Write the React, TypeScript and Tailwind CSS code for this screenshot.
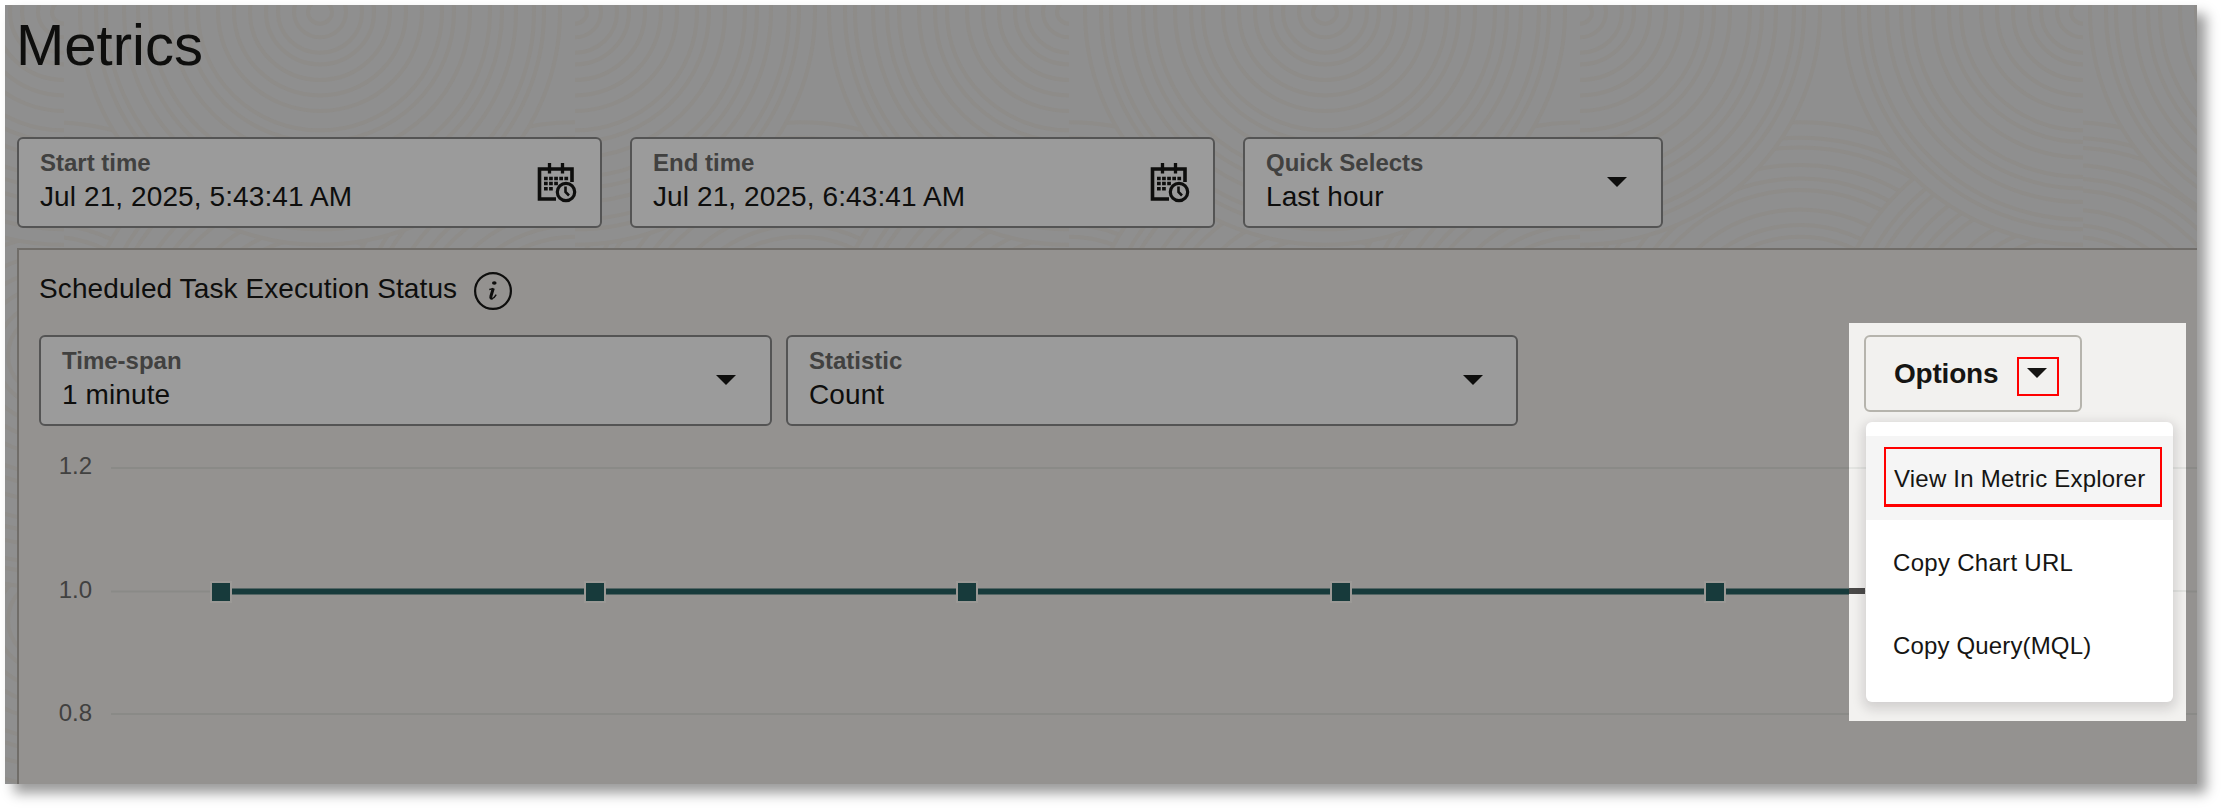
import { ReactNode } from "react";

const FONT = "font-['Liberation_Sans',Arial,sans-serif]";

const lowerRings = [50, 320, 575, 800, 1069, 1325, 1580, 1800, 2070];
const rightHalves = [575, 1580];
const leftHalves = [64, 1069, 2083];
const fullRings = [320, 1325, 2330];
const radii = [240, 224, 214, 196, 182, 170, 150, 134, 122, 102, 86, 70, 54, 42, 26, 12];

const points = [221, 595, 967, 1341, 1715];

function Rings({ cx, cy }: { cx: number; cy: number }) {
  return (
    <g>
      {radii.map((r) => (
        <ellipse key={r} cx={cx} cy={cy} rx={r} ry={r * 0.97} />
      ))}
    </g>
  );
}

function Backdrop() {
  return (
    <svg
      className="absolute inset-0"
      width="2192"
      height="779"
      viewBox="5 5 2192 779"
      fill="#8f8f8f"
      stroke="#8e8c89"
      strokeWidth="4"
    >
      <defs>
        {rightHalves.map((x) => (
          <clipPath id={`half-${x}`} key={x}>
            <rect x={x} y="0" width="260" height="300" />
          </clipPath>
        ))}
        {leftHalves.map((x) => (
          <clipPath id={`half-${x}`} key={x}>
            <rect x={x - 260} y="0" width="260" height="300" />
          </clipPath>
        ))}
      </defs>
      <Rings cx={50} cy={620} />
      {lowerRings.map((x) => (
        <Rings key={x} cx={x} cy={355} />
      ))}
      {[...rightHalves, ...leftHalves].map((x) => (
        <g key={x} clipPath={`url(#half-${x})`}>
          <Rings cx={x} cy={12} />
        </g>
      ))}
      {fullRings.map((x) => (
        <Rings key={x} cx={x} cy={12} />
      ))}
    </svg>
  );
}

function Caret() {
  return (
    <svg width="20" height="10" viewBox="0 0 20 10" fill="currentColor">
      <path d="M0 0h20L10 10z" />
    </svg>
  );
}

function CalendarClock() {
  return (
    <svg
      className="mt-[3px]"
      width="40"
      height="40"
      viewBox="0 0 40 40"
      fill="none"
      stroke="currentColor"
    >
      <path d="M19 36H2.500V6h32.500v13" strokeWidth="3.600" />
      <path d="M12.500 0v10.500M25.500 0v10.500" strokeWidth="3.300" />
      <path d="M7 15.500h24.500M7 20.500h14M7 25.700h9" strokeWidth="3.600" strokeDasharray="3.700 1.400" />
      <circle cx="29" cy="29" r="8.700" strokeWidth="3.200" />
      <path d="M28.500 23.500v5.500l3.500 3.500" strokeWidth="2.600" />
    </svg>
  );
}

function InfoIcon() {
  return (
    <svg width="38" height="38" viewBox="0 0 38 38" fill="none" stroke="currentColor">
      <circle cx="19" cy="19" r="17.900" strokeWidth="2.200" />
      <ellipse cx="20.300" cy="11" rx="2.300" ry="1.700" fill="currentColor" stroke="none" />
      <path d="M15.300 17.600c1.600-.3 2.700-.7 4-1.200" strokeWidth="1.500" />
      <path d="M19.300 16.400l-2.300 7.600c-.6 2 .2 2.600 1.400 2" strokeWidth="3" />
      <path d="M18 26.600c1.800-.5 3.200-2 4.200-3.900" strokeWidth="1.400" />
    </svg>
  );
}

type FieldProps = {
  label: string;
  value: string;
  className: string;
  children: ReactNode;
};

function Field({ label, value, className, children }: FieldProps) {
  return (
    <div
      className={`flex h-[91px] items-center justify-between rounded-md border-2 border-[#545454] bg-[#9b9b9b] pb-[2px] pl-[21px] ${className}`}
    >
      <div className="pb-[1px]">
        <div className="text-[24px] leading-[32px] font-bold text-[#414140]">
          {label}
        </div>
        <div className="text-[28px] leading-[36px] tracking-[0.1px]">{value}</div>
      </div>
      {children}
    </div>
  );
}

function Chart() {
  return (
    <svg width="2178" height="358" viewBox="19 426 2178 358" className="block">
      <g stroke="#8a8a87" strokeWidth="2">
        <path d="M111 468h2086" />
        <path d="M111 591.500h2086" />
        <path d="M111 714h2086" />
      </g>
      <g fill="#414140" fontSize="24" textAnchor="end">
        <text x="92" y="474">1.2</text>
        <text x="92" y="598">1.0</text>
        <text x="92" y="721">0.8</text>
      </g>
      <path d="M221 591.500h1628" stroke="#173a3b" strokeWidth="6" />
      {points.map((x) => (
        <rect
          key={x}
          x={x - 10}
          y="582"
          width="20"
          height="20"
          fill="#173a3b"
          stroke="#9b9996"
          strokeWidth="2"
        />
      ))}
    </svg>
  );
}

function OptionsMenu() {
  return (
    <div className="absolute top-[318px] left-[1844px] h-[398px] w-[337px] overflow-hidden bg-[#f2f1ef] pt-3 pl-[15px] text-[#161513]">
      <div className="absolute top-[265px] left-0 h-[6px] w-4 bg-[#4b4a49]" />
      <div className="absolute top-[144px] left-0 h-[2px] w-full bg-[#e3e4e1]" />
      <div className="absolute top-[267px] left-0 ml-4 h-[2px] w-full bg-[#e3e4e1]" />
      <div className="relative flex h-[77px] w-[218px] items-center rounded-md border-2 border-[#b6b4ad] bg-[#f2f1ef] pl-[28px]">
        <span className="text-[28px] font-bold tracking-[-0.2px]">Options</span>
        <span className="mt-[5px] ml-[19px] flex h-[39px] w-[42px] border-2 border-[#ff0000] pt-[9px] pl-2">
          <Caret />
        </span>
      </div>
      <div className="relative mt-[10px] ml-[2px] w-[307px] rounded-md bg-white py-[14px] text-[24px] tracking-[0.2px] shadow-[0_4px_12px_3px_rgba(30,20,25,0.15)]">
        <div className="flex h-[84px] items-center bg-[#f5f5f5] pl-[18px]">
          <span className="-mt-[2px] flex h-[60px] w-[278px] items-center border-2 border-b-3 border-[#ff0000] pt-[4px] pl-[8px] tracking-[0.22px] whitespace-nowrap">
            View In Metric Explorer
          </span>
        </div>
        <div className="flex h-[84px] items-center pt-[1px] pl-[27px] tracking-[0.3px]">Copy Chart URL</div>
        <div className="flex h-[84px] items-center pl-[27px] tracking-[0.15px]">Copy Query(MQL)</div>
      </div>
    </div>
  );
}

export default function App() {
  return (
    <div className={`h-[809px] w-[2222px] overflow-hidden bg-white p-[5px] ${FONT}`}>
      <div className="relative h-[779px] w-[2192px] bg-[#8f8f8f] text-[#0e0e0d] shadow-[9px_9px_12px_0_rgba(0,0,0,0.4)]">
        <Backdrop />
        <div className="relative flex h-full flex-col overflow-hidden pl-3">
          <h1 className="h-[132px] pt-2 text-[58px] leading-[64px] -ml-[1px]">Metrics</h1>
          <div className="flex gap-7">
            <Field label="Start time" value="Jul 21, 2025, 5:43:41 AM" className="w-[585px] pr-[23px]">
              <CalendarClock />
            </Field>
            <Field label="End time" value="Jul 21, 2025, 6:43:41 AM" className="w-[585px] pr-[23px]">
              <CalendarClock />
            </Field>
            <Field label="Quick Selects" value="Last hour" className="w-[420px] pr-[34px]">
              <Caret />
            </Field>
          </div>
          <div className="mt-5 h-[536px] border-t-2 border-l-2 border-[#706d69] bg-[#949290]">
            <div className="flex h-[85px] items-start gap-[17px] pl-5">
              <h2 className="pt-[21px] text-[28px] leading-[36px] tracking-[0.1px]">
                Scheduled Task Execution Status
              </h2>
              <span className="pt-[22px]">
                <InfoIcon />
              </span>
            </div>
            <div className="flex gap-[14px] pl-[20px]">
              <Field label="Time-span" value="1 minute" className="w-[733px] pr-[34px]">
                <Caret />
              </Field>
              <Field label="Statistic" value="Count" className="w-[732px] pr-[33px]">
                <Caret />
              </Field>
            </div>
            <Chart />
          </div>
        </div>
        <OptionsMenu />
      </div>
    </div>
  );
}
